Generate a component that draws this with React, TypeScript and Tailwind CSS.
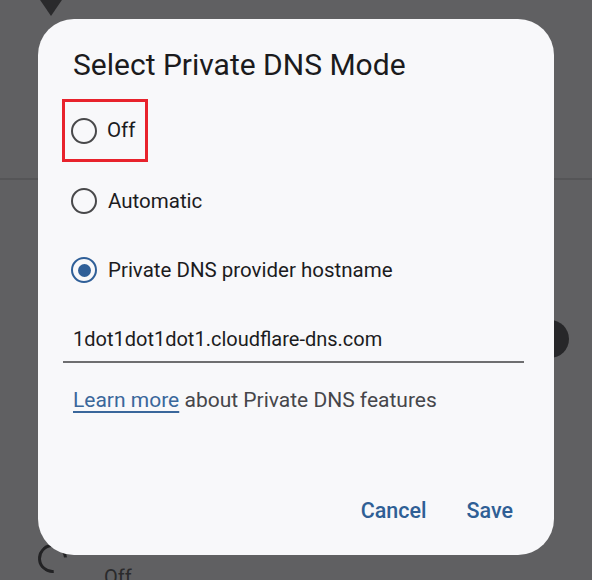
import React from "react";

const font = { fontFamily: "Roboto, 'Noto Sans', sans-serif" };

function Radio({ checked }: { checked?: boolean }) {
  return (
    <span
      className={`w-[26px] h-[26px] rounded-full border-[2.5px] flex items-center justify-center shrink-0 ${
        checked ? "border-[#2f5f98]" : "border-[#48484a]"
      }`}
    >
      {checked && <span className="w-[13px] h-[13px] rounded-full bg-[#2f5f98]" />}
    </span>
  );
}

export default function App() {
  return (
    <div className="relative w-[592px] h-[580px] overflow-hidden bg-[#606062]" style={font}>
      {/* settings page behind the scrim */}
      <div className="absolute left-[36px] -top-[6px] w-0 h-0 border-l-[15px] border-r-[15px] border-t-[22px] border-l-transparent border-r-transparent border-t-[#2a2a2c]" />
      <div className="absolute left-0 right-0 top-[178px] h-[2px] bg-[#555557]" />
      <div className="absolute left-[531px] top-[320px] w-[38px] h-[38px] rounded-full bg-[#272729]" />
      <div className="absolute left-[38px] top-[544px] w-[29px] h-[29px] rounded-full border-[3px] border-[#222224] border-r-transparent rotate-[40deg]" />
      <div className="absolute left-[104px] top-[565px] text-[20px] leading-[24px] text-[#2a2a2c]">Off</div>

      {/* dialog */}
      <div className="relative z-10 ml-[38px] mt-[19px] w-[516px] h-[536px] rounded-[36px] bg-[#f8f8fa] flex flex-col pl-[35px] pr-[30px] pt-[28px]">
        <h1 className="text-[30px] leading-[36px] text-[#1b1b1d]">Select Private DNS Mode</h1>

        <div className="mt-[16px] flex flex-col">
          <div className="-ml-[11px] w-[86px] h-[63px] border-[3px] border-[#e8222c] flex items-center gap-[10px] pl-[6px]">
            <Radio />
            <span className="text-[20.5px] text-[#1c1c1e]">Off</span>
          </div>
          <div className="h-[78px] flex items-center gap-[11px] -ml-[2px]">
            <Radio />
            <span className="text-[20.5px] text-[#1c1c1e]">Automatic</span>
          </div>
          <div className="h-[60px] flex items-center gap-[11px] -ml-[2px]">
            <Radio checked />
            <span className="text-[20.5px] text-[#1c1c1e]">Private DNS provider hostname</span>
          </div>
        </div>

        <div className="mt-[25px] -ml-[10px] pl-[10px] border-b-2 border-[#6e6e70] pb-[8px] text-[20px] leading-[28px] text-[#1c1c1e]">
          1dot1dot1dot1.cloudflare-dns.com
        </div>

        <p className="mt-[23px] text-[21px] leading-[28px] text-[#46464a]">
          <span className="text-[#3a679b] underline decoration-[1.5px] underline-offset-[4px]">Learn more</span> about Private DNS features
        </p>

        <div className="mt-auto mb-[30px] flex justify-end gap-[40px] pr-[11px] text-[21.5px] leading-[28px] font-medium text-[#2f5f95]">
          <span>Cancel</span>
          <span>Save</span>
        </div>
      </div>
    </div>
  );
}
